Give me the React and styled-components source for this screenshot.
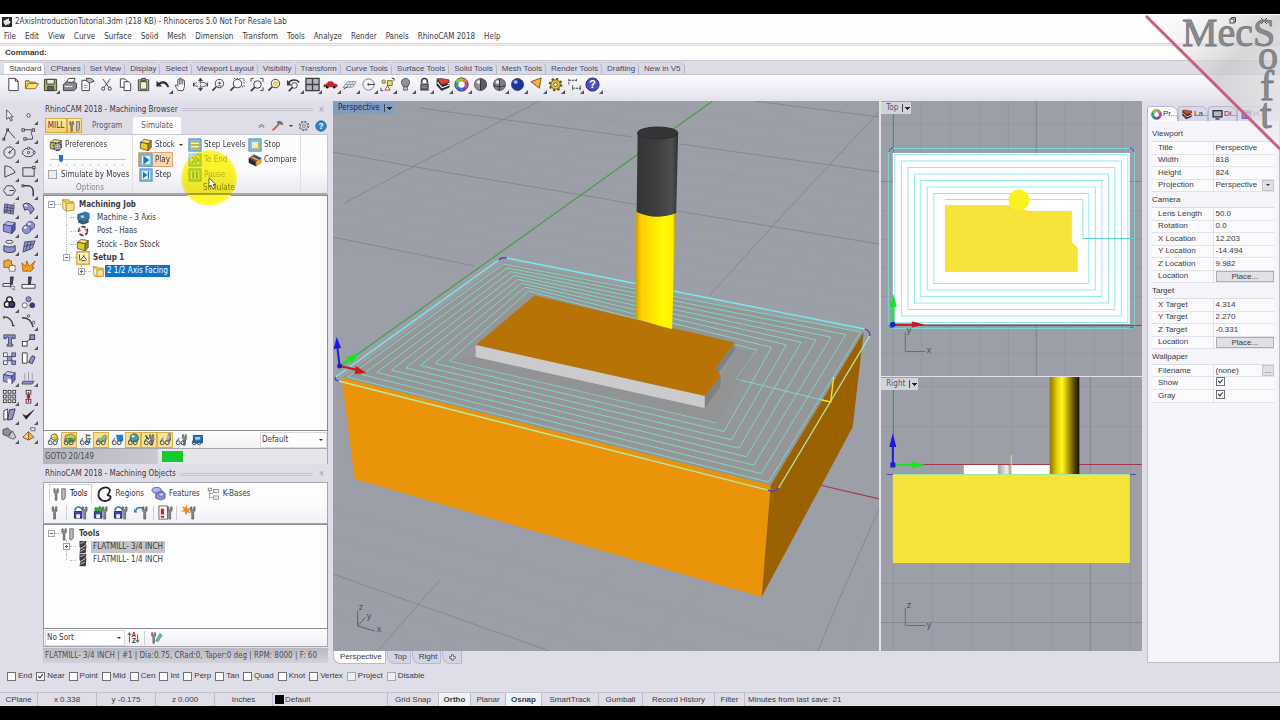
import React from "react";
import styled, { createGlobalStyle, css } from "styled-components";

const UI = '"DejaVu Sans Condensed", "DejaVu Sans", sans-serif';
const CLASSIC = '"Liberation Sans", Arial, sans-serif';

const GlobalStyle = createGlobalStyle`
  *, *::before, *::after { box-sizing: border-box; }
  body { margin: 0; background: #000; color: #3a3a42; font: 8px/12px ${UI}; }
  button, input, select { font: inherit; color: inherit; margin: 0; padding: 0; border: 0; background: none; border-radius: 0; }
  ul { list-style: none; margin: 0; padding: 0; }
  h2, h3 { margin: 0; font: inherit; }
  svg { display: block; }
`;

/* ---------- icons ---------- */

const P = "#8d92dc";
const K = "#3c3c44";
const magnifier = (x = 9, y = 7, r = 4.5) => (
  <g fill="none" stroke={K}>
    <circle cx={x} cy={y} r={r} fill="#fff" fillOpacity=".6" />
    <path d={`M${x - r * 0.7} ${y + r * 0.7}L${x - r - 3} ${y + r + 3}`} strokeWidth="1.8" />
  </g>
);
const cube = (a, b, c) => (
  <g stroke={K} strokeWidth=".8" strokeLinejoin="round">
    <path d="M1.5 5L6 1.5l8 1.5-3.500 3.500z" fill={a} />
    <path d="M1.500 5l9 1.500v8L1.500 12z" fill={b} />
    <path d="M10.500 6.500L14 3v7.500l-3.500 4z" fill={c} />
  </g>
);
const sphere = (x, y, r, fill, light = "#fff") => (
  <g>
    <circle cx={x} cy={y} r={r} fill={fill} stroke="#30303a" strokeWidth=".7" />
    <ellipse cx={x - r * 0.3} cy={y - r * 0.4} rx={r * 0.35} ry={r * 0.3} fill={light} opacity=".85" />
  </g>
);
const tool = (x = 0) => (
  <path d={`M${x} 2l1.500 0 0 3 2 0 0-3 1.500 0 0 4-1.500 2v7h-2v-7L${x} 6z`} fill="#8b8d90" stroke="#4b4d50" strokeWidth=".7" />
);
const glasses = (
  <g fill="none" stroke="#34506c" strokeWidth="1.200">
    <circle cx="4" cy="12" r="2.400" />
    <circle cx="10" cy="12" r="2.400" />
    <path d="M1.500 11L5 6M12 11l2-4" />
  </g>
);
const framed = (body) => (
  <g>
    <rect x="1" y="1" width="14" height="14" fill="#7cc3ea" stroke="#3f90c4" />
    <rect x="3.500" y="3.500" width="9" height="9" fill="#f4f6dc" />
    {body}
  </g>
);
const wheel = (
  <g fill="none" strokeWidth="3.200">
    <path d="M8 2.500a5.500 5.500 0 0 1 4.800 2.800" stroke="#f08a24" />
    <path d="M12.800 5.300a5.500 5.500 0 0 1 0 5.400" stroke="#e5338c" />
    <path d="M12.800 10.700A5.500 5.500 0 0 1 8 13.500" stroke="#7b3fd0" />
    <path d="M8 13.500a5.500 5.500 0 0 1-4.800-2.800" stroke="#2a6fe0" />
    <path d="M3.200 10.700a5.500 5.500 0 0 1 0-5.400" stroke="#25ad70" />
    <path d="M3.200 5.300A5.500 5.500 0 0 1 8 2.500" stroke="#9fcf2b" />
    <circle cx="8" cy="8" r="7.200" stroke="#333" strokeWidth=".7" />
    <circle cx="8" cy="8" r="3.800" stroke="#333" strokeWidth=".5" fill="#fff" />
  </g>
);
const layers = (
  <g stroke={K} strokeWidth=".7" strokeLinejoin="round">
    <path d="M1 3v6l5 5.500 8-3.500V8z" fill="#26262c" />
    <path d="M1.500 5.500l5 6 7.500-3" fill="none" stroke="#fff" strokeWidth="1.200" />
    <path d="M1 2l5 7 8-3.500L13.500 3 6 5z" fill="#b82218" />
    <path d="M1 2l4-.5L13.500 3 14 5.500 6 8z" fill="#ea4128" />
  </g>
);
const gear = (fill, s = K) => (
  <g stroke={s} fill={fill}>
    <circle cx="8" cy="8" r="6" strokeWidth="2.600" strokeDasharray="2.300 2.400" />
    <circle cx="8" cy="8" r="5" />
    <circle cx="8" cy="8" r="2" fill="#fff" />
  </g>
);
const mark = (size, fill) => (
  <text x="8" y="12" textAnchor="middle" fontSize={size} fontWeight="700" fontFamily={CLASSIC} fill={fill}>?</text>
);
const folder = (
  <g stroke="#b48a28" strokeWidth=".8">
    <path d="M3 3h4l1 1.500h6V14H4z" fill="#f3d35f" />
    <path d="M3 3l4 3.500V15L3 12z" fill="#fdf2b0" />
    <path d="M7 6.500h7V14H7z" fill="#fbe88e" />
  </g>
);

const ICONS = {
  app: <g><rect width="16" height="16" fill="#26282c" /><path d="M2 6c3 0 4-3 7-3l2-2 0 4 3 3-3 4-3 0-2 2-3-4z" fill="#dfe3e6" /></g>,
  doc: <path d="M3 1.500h7l3 3v10H3zM10 1.500v3h3" fill="#fff" stroke={K} />,
  open: <g stroke="#8d6a1a"><path d="M1.500 12.500V4h4l1 1.500h6V7" fill="#ecc452" /><path d="M1.500 12.500L5 7h10.500l-3.500 5.500z" fill="#fbe388" /></g>,
  save: <g stroke={K}><path d="M1.500 2.500h13v12h-13z" fill="#a9b24e" /><path d="M4 2.500h8v5H4z" fill="#e9ebee" /><path d="M5 10h6v4.500H5z" fill="#5c6064" /></g>,
  print: <g stroke={K}><path d="M4.500 6L7 1.500h7L12 6" fill="#fff" /><path d="M1.500 8l3-2.500h9l2 1.500v5l-3 2.500h-11z" fill="#85888e" /><path d="M3 10h8" stroke="#fff" /></g>,
  docprops: <g stroke={K}><path d="M2 3.500h8v11H2z" fill="#fff" /><path d="M7 1.500l5 0 3 3-5 2-3-2z" fill="#b9bcc6" /><path d="M4 9h4M4 11.500h4" strokeWidth=".6" /></g>,
  cut: <g fill="none" stroke={K}><path d="M4 2l6.500 9M12 2L5.500 11" /><circle cx="4.500" cy="12.500" r="1.700" /><circle cx="11.500" cy="12.500" r="1.700" /></g>,
  copy: <g fill="#fff" stroke={K}><path d="M2.500 2h5l2 2v7h-7z" /><path d="M6.500 5h5l2 2v7.500h-7z" /></g>,
  paste: <g stroke={K}><path d="M2.500 3h11v11.500h-11z" fill="#d8d03a" /><path d="M4.500 5h7v8h-7z" fill="#f6f3c2" /><path d="M6 1.500h4v2.500H6z" fill="#9a9da3" /></g>,
  undo: <path d="M1.500 4v6h6L5.500 8c3-2 6-1 7.500 3l2 0C14 5 9 3 4 6z" fill="#2e2e34" />,
  hand: <path d="M4.500 14.500L1 9c1-1.300 2 0 3 1V3.500c0-1.300 1.700-1.300 1.700 0V2c0-1.300 1.800-1.300 1.800 0v1c0-1.300 1.800-1.300 1.800 0V4c.2-1.200 1.900-1.200 1.900.4V10l-1.500 4.500zM5.700 3.500V8M7.500 3v5M9.300 4v4" fill="#fff" stroke={K} strokeWidth=".9" />,
  rotate: <g fill="none" stroke={K} strokeWidth=".8"><ellipse cx="8" cy="8" rx="6.500" ry="2.500" strokeDasharray="8 2" /><path d="M8 2v12" strokeDasharray="2 1" /><path d="M6 4l2-3 2 3zM6 12l2 3 2-3zM1 6v4l-1-2zM15 6v4l1-2z" fill={K} /></g>,
  zoom: <g>{magnifier()}<path d="M7 6.500h4M9 5v3M7 9.500h4" stroke={K} strokeWidth=".9" /></g>,
  zoomwin: <g><path d="M4 1.500h11v9H9" fill="none" stroke={K} strokeDasharray="1.500 1.500" />{magnifier(8, 7)}</g>,
  zoomext: <g>{magnifier(9, 8, 4)}<path d="M2 5V1.500h3M12 1.500h3V5M15 11v3.500h-3" fill="none" stroke={K} /></g>,
  zoomsel: <g>{magnifier()}<circle cx="9" cy="7" r="2.700" fill="#efdc2f" /></g>,
  undoview: <g><path d="M2 7c3-5 10-5 12-1" fill="none" stroke={K} strokeWidth="1.600" /><path d="M1 3v6h5z" fill={K} />{magnifier(9, 9, 3)}</g>,
  fourview: <g><rect x="1" y="1.500" width="14" height="13" fill="#b5b7bf" stroke={K} strokeWidth="1.400" /><path d="M8 1.500v13M1 8h14" stroke={K} strokeWidth="1.400" /></g>,
  car: <g><path d="M1 8.500l3-1 2-2.500h4l2 2.500 3 .5v2.500H1z" fill="#d3221c" stroke="#7e1814" strokeWidth=".6" /><circle cx="4.500" cy="11" r="1.300" /><circle cx="12" cy="11" r="1.300" /></g>,
  cplane: <g fill="none" stroke="#8e9099"><path d="M1 11l5-6h9l-4 6zM3.500 8h9.500M5 11l4-6M8 11l4-6" /><path d="M2 13l4-3" stroke={K} /></g>,
  circlept: <g fill="none" stroke="#74767e"><circle cx="8" cy="8" r="6" /><path d="M8 8h7" stroke={K} /><circle cx="8" cy="8" r="1" fill={K} /></g>,
  select: <g><circle cx="4" cy="5" r="2" fill="#f1c52d" stroke={K} strokeWidth=".6" /><rect x="8" y="4" width="5" height="5" fill="#f3dc3f" stroke={K} strokeWidth=".7" /><path d="M5 14l3-4.500 3 4.500z" fill="#fff" stroke="#b0483c" /><path d="M12.500 1.500H15V4M1 11.500v3h2.500" fill="none" stroke={K} /></g>,
  bulb: <g stroke={K} strokeWidth=".8"><path d="M5.500 10C2 6 4 1.500 8 1.500S14 6 10.500 10z" fill="#8f9299" /><path d="M6 10.500h4v3.500H6z" fill="#c9ccd2" /></g>,
  lock: <g><path d="M5 7V4.500a3 3 0 0 1 6 0V7" fill="none" stroke={K} strokeWidth="1.600" /><rect x="3.500" y="7" width="9" height="7.500" fill="#4c4e56" /><path d="M5 9.500h6M5 11.500h6" stroke="#a9abb3" /></g>,
  layers,
  wheel,
  shade: <g>{sphere(8, 8, 6.5, "#8e9096")}<path d="M8 1.500a6.500 6.500 0 0 1 0 13z" fill="#2c2c32" opacity=".5" /><path d="M8 2v12" stroke="#303036" /></g>,
  render: <g>{sphere(8, 8, 6.500, "#7c7e84")}<path d="M8 2v12M2 9c4 2 8 2 12 0" fill="none" stroke="#303036" /></g>,
  blue: sphere(8, 8, 6.5, "#1d3696", "#b9c8ff"),
  spot: <path d="M2 5l11-4-2 11z" fill="#f0b044" stroke="#7b5414" />,
  options: gear("#e6c64a", "#6b5a20"),
  dims: <path d="M2 2v7M2 3.500h8M10 2v3M6 12h9M6 9v5M14 9v5" fill="none" stroke={K} strokeDasharray="2.500 .8" />,
  help: <g><circle cx="8" cy="8" r="7" fill="#4a50c4" stroke="#20246e" />{mark(12, "#fff")}</g>,

  arrow: <path d="M5 2v10l2.500-2 2 4 1.500-1-2-3.500h3z" fill="#fff" stroke={K} strokeWidth=".9" />,
  point: <circle cx="8" cy="8" r="1.800" fill="#fff" stroke={K} />,
  polyline: <g fill="none" stroke={K}><path d="M2 13L6 3l8 9" /><rect x="1" y="12" width="2" height="2" /><rect x="5" y="2" width="2" height="2" /></g>,
  curve: <g fill="none" stroke={K}><path d="M2 3h11c-5 4 1 6-1 10H5" /><rect x="1" y="2" width="2.500" height="2.500" fill="#fff" /><rect x="12" y="2" width="2.500" height="2.500" fill="#fff" /><rect x="3" y="11.500" width="2.500" height="2.500" fill="#fff" /></g>,
  circle: <g fill="none" stroke={K}><circle cx="8" cy="8" r="6" /><path d="M8 8l4-4" /><circle cx="8" cy="8" r=".8" /></g>,
  ellipse: <g fill="none" stroke={K}><ellipse cx="8" cy="8" rx="6.500" ry="4.500" /><circle cx="8" cy="8" r="1.200" /><circle cx="8" cy="3.500" r="1.200" fill="#fff" /><circle cx="14" cy="8" r="1.200" fill="#fff" /></g>,
  arc: <path d="M3 2v12l11-5C12 5 8 2 3 2z" fill="none" stroke={K} />,
  rect: <g fill="none" stroke={K}><rect x="2" y="4" width="12" height="9" /><rect x="12.500" y="2.500" width="2.500" height="2.500" fill="#fff" /></g>,
  polygon: <g fill="none" stroke={K}><path d="M5 3h6l3.500 5-3.500 5H5L1.500 8z" /><path d="M8 8h5" /></g>,
  fillet: <g fill="none" stroke={K}><path d="M2 3h5c4 0 6 3 6 6v5" strokeWidth="1.600" /><rect x="1" y="2" width="2" height="2" fill="#fff" /></g>,
  srfpts: <g stroke={K} strokeWidth=".8"><path d="M3 3l10 2-1 9-10-2z" fill={P} /><path d="M6 3.500l-1 9M10 4.500l-1 9M2.500 6.500l10 1.500M2 9.500l10 1.500M13 2l-2 3M2 14l2-3" fill="none" /></g>,
  srfcurve: <g stroke={K}><path d="M2 4c5-4 10 0 12 5l-4 5c0-5-3-6-6-4z" fill={P} /><path d="M2 4l4-1 2 4" fill="#fff" strokeWidth=".6" /></g>,
  box: cube("#b7bbf4", P, "#5459b8"),
  spheres: <g>{sphere(10, 6, 4.5, P)}{sphere(6, 10, 4.5, P)}</g>,
  loft: <g stroke={K} fill={P}><path d="M2 7c3 2 9 2 12 0v6c-3 2-9 2-12 0z" /><ellipse cx="8" cy="3" rx="4" ry="1.600" fill="#fff" /></g>,
  patch: <g stroke={K} strokeWidth=".8"><path d="M4 3l11-1-3 8-10 4z" fill={P} /><path d="M7.500 3L5 13M11 2.500L8.500 12M3 8l11-3" fill="none" /></g>,
  puzzle: <g stroke="#7d5414" strokeWidth=".8"><path d="M2 3h3a1.500 1.500 0 0 1 3 0h2v3a1.500 1.500 0 0 1 0 3v1H2z" fill="#f2aa30" /><path d="M8 8h6v6H8v-2a1 1 0 0 1 0-2z" fill="#fff" /></g>,
  burst: <path d="M2 14L1 5l4 4 1-6 3 6 6-6-3 7 2 0-3 4z" fill="#f4a11e" stroke="#96540c" strokeWidth=".8" />,
  trim: <g stroke={K}><path d="M9 1l3 0-1 8-2 0z" fill="#343a92" /><path d="M1 8h8v3H1z" fill="#fff" /><path d="M8 11l5 0 0 4z" fill="#fff" strokeWidth=".7" /></g>,
  split: <g stroke={K}><path d="M8 1l3 0-1 8-2 0z" fill="#343a92" /><path d="M1 9h14v4H1z" fill="#fff" /></g>,
  bool1: <g fill="none" stroke="#1c1c28" strokeWidth="1.500"><circle cx="8" cy="5" r="3" fill="#fff" /><circle cx="5.500" cy="10" r="3" fill="#fff" /><circle cx="10.500" cy="10" r="3" fill="#363a8c" /></g>,
  bool2: <g stroke={K} strokeWidth=".8"><circle cx="8" cy="4.500" r="2.700" fill={P} /><circle cx="4" cy="11" r="2.700" fill="#fff" /><circle cx="12" cy="11" r="2.700" fill="#333a90" /></g>,
  bend: <path d="M2 3c6 0 9 4 10 10M2 2v3M10.500 12.500h3" fill="none" stroke={K} strokeWidth="1.300" />,
  bendpts: <g fill="none" stroke={K}><path d="M1 4c7 0 10 3 12 10" strokeWidth="1.500" /><circle cx="8" cy="2" r="1.300" fill="#fff" /><circle cx="13.500" cy="9" r="1.300" fill="#fff" /></g>,
  text: <path d="M2 2h12v4h-2.500V4.500H10V12h1.500v2h-6v-2H7V4.500H4.500V6H2z" fill={P} stroke={K} strokeWidth=".9" />,
  move: <g stroke={K} fill="#fff"><rect x="1.500" y="9" width="5" height="5" /><rect x="9.500" y="2" width="5" height="5" fill={P} /><path d="M6 9.500L10 6" /></g>,
  array: <g stroke={K} strokeWidth=".8" fill="#fff"><rect x="1.500" y="2" width="4" height="4" /><rect x="6" y="6" width="4.500" height="4.500" fill={P} /><rect x="10.500" y="2" width="4" height="4" fill={P} /><rect x="1.500" y="10.500" width="4" height="4" /><rect x="10.500" y="10.500" width="4" height="4" fill={P} /></g>,
  rotate2: <g stroke={K} fill="#fff"><path d="M1.500 2h5v11h-5z" /><path d="M8 12l4-7 3 1.500-3 7z" fill={P} /></g>,
  solid: <g>{cube("#c3c6f7", P, "#6b70cb")}<path d="M6 9l4 1v5l-4-1z" fill="#fff" /></g>,
  extrude: <g stroke={K} strokeWidth=".8"><path d="M2 12h12l-2 3H1z" fill={P} /><path d="M4 11V3M8 11V2M12 11V3" stroke="#8b8fa8" /></g>,
  grid9: <g fill="#fff" stroke={K}>{[2, 7, 12].map((x) => [2, 7, 12].map((y) => <rect key={x + "-" + y} x={x - 0.5} y={y - 0.5} width="3" height="3" />))}</g>,
  chain: <g fill="#fff" stroke={K}><rect x="5.500" y="1.500" width="5" height="4" /><rect x="5.500" y="11" width="5" height="4" /><path d="M8 3v11" stroke="#c3202a" strokeWidth="1.600" /><circle cx="8" cy="8" r="1.500" fill="#c3202a" /></g>,
  books: <g stroke={K}><path d="M2 4l4-2v10l-4 2z" fill="#fff" /><path d="M8 3l6-1-3 11-5 1z" fill={P} /></g>,
  check: <path d="M2 8l3.500 5L14 3 5.500 9.500z" fill="#1e1e24" stroke="#1e1e24" strokeWidth=".6" />,
  solids: <g stroke={K} strokeWidth=".8"><path d="M1 4l5-2 4 4-4 5-5-2z" fill="#8e9098" /><path d="M7 12l4-7 4 7-3 2z" fill="#c9cbd2" /></g>,
  pyramid: <g stroke="#7b5414" strokeWidth=".8"><path d="M8 6l6 6-6 3-6-3z" fill="#f0b63e" /><path d="M8 6v9L2 12z" fill="#f9d67c" /><path d="M10 2h5v3h-4z" fill="#fff" stroke={K} /></g>,

  prefs: <g>{cube("#e5d770", "#cdbb3d", "#9b8b24")}<g transform="translate(4 4) scale(.72)">{gear("#c8cacf")}</g></g>,
  stock: cube("#f4e060", "#e6cb27", "#a98812"),
  tool: tool(4.5),
  play: framed(<path d="M5 3l7 5-7 5z" fill="#2476b8" />),
  step: framed(<path d="M4.500 4l5 4-5 4zM10 4h1.500v8H10z" fill="#2476b8" />),
  levels: framed(<path d="M3 4.500h10M3 8h10M3 11.500h10" stroke="#c0a000" strokeWidth="1.500" />),
  toend: framed(<path d="M4 4l4 4-4 4M8 4l4 4-4 4" fill="none" stroke="#2476b8" strokeWidth="1.500" />),
  pause: framed(<path d="M5 4h2v8H5zM9 4h2v8H9z" fill="#2476b8" />),
  stop: framed(<rect x="4" y="4" width="8" height="8" fill="#f7edb8" stroke="#c9ac3c" />),
  compare: <g strokeWidth=".5" stroke={K}><path d="M1 6l6-4 8 4-6 4z" fill="#d9312a" /><path d="M3 5l2-1.300 8 4-2 1.300z" fill="#f1dd31" /><path d="M5 3.700l2-1.300 8 3.600-2 1.500z" fill="#3263cf" /><path d="M1 6l8 4v5L1 11z" fill="#26262c" /><path d="M9 10l6-4v5l-6 4z" fill="#e9b52b" /></g>,
  up: <path d="M3 9l5-3 5 3M3 12l5-3 5 3" fill="none" stroke="#555" strokeWidth="1.200" />,
  hammer: <g><path d="M2 14L9 7" stroke="#d06a1c" strokeWidth="2.400" /><path d="M7 3l4-1 4 3-1 3-3-2-2 2z" fill="#6d7076" /></g>,
  cog: <g fill="none" stroke="#6a6c74"><circle cx="8" cy="8" r="6.300" strokeWidth="1.600" strokeDasharray="2.500 2.450" /><circle cx="8" cy="8" r="5" /><circle cx="8" cy="8" r="2" /></g>,
  info: <g><circle cx="8" cy="8" r="7" fill="#2f86c8" stroke="#1b5f98" />{mark(11, "#fff")}</g>,
  job: <g stroke="#a9811e" strokeWidth=".8"><path d="M2 2h7l1 2h4v8H4z" fill="#f1cd52" /><path d="M2 2l4 4v9l-4-3z" fill="#fbe99b" /><path d="M6 6h9v8l-9 1z" fill="#f8e08a" /></g>,
  machine: <g stroke="#163a58" strokeWidth=".7"><path d="M2 4l9-3 4 2v6l-9 3-4-2z" fill="#2c7fc0" /><path d="M3 11l6 1 5-2v3l-6 2-5-2z" fill="#4d5c68" /><path d="M4 5l6-1v4L6 9z" fill="#a8d4f0" /></g>,
  post: <g fill="none" stroke="#4b3c44" strokeWidth="2"><circle cx="8" cy="8" r="5" strokeDasharray="5 2" /><path d="M3 6l3 2M10 5l3 5" stroke="#c77890" strokeWidth="1.500" /></g>,
  setup: <g><rect x="1" y="1" width="14" height="14" fill="#fdf3cf" stroke="#e19c22" strokeWidth="1.600" /><path d="M4 4v7h7M4 11l6-6M8 5l4 5" fill="none" stroke={K} /><circle cx="5" cy="10" r="1.500" fill="#e6a02c" /></g>,
  folder,
  g1: <g>{sphere(9, 5, 4, "#e3bd38")}{glasses}</g>,
  g2: <g><path d="M3 3l8-2 4 3v6l-9 2-4-3z" fill="#e3c13f" stroke={K} strokeWidth=".7" /><path d="M6 6h6v4H6z" fill="#3d9a57" />{glasses}</g>,
  g3: <g><path d="M9 1v11" stroke={K} /><path d="M9 3h5" stroke="#c23a2c" strokeWidth="2" /><path d="M9 7h5" stroke="#2f9f48" strokeWidth="2" /><path d="M9 11h5" stroke="#2c6fc0" strokeWidth="2" />{glasses}</g>,
  g4: <g><path d="M4 10l8-8 3 3-7 7z" fill="#7fc29a" stroke={K} strokeWidth=".6" />{glasses}</g>,
  g5: <g><path d="M6 2h9v8H8z" fill="#2c7fc0" />{glasses}</g>,
  g6: <g>{sphere(9, 6, 5, "#3ea4a2")}{glasses}</g>,
  g7: <g>{tool(8)}<path d="M3 3l4 5" stroke={K} strokeWidth="1.500" />{glasses}</g>,
  g8: <g><path d="M11 1h3v8h-5" fill="#a9abae" stroke={K} strokeWidth=".7" />{glasses}</g>,
  g9: <g>{tool(9)}{glasses}</g>,
  g10: <g><path d="M3 3h11v9H3z" fill="#2c7fc0" stroke="#163a58" /><path d="M5 5h6v3H5z" fill="#a8d4f0" />{glasses}</g>,
  tools: <g>{tool(1)}<path d="M10 2h4v10l-2 3-2-1V8z" fill="#b9bbbe" stroke="#4b4d50" strokeWidth=".8" /></g>,
  regions: <path d="M13 4C10-1 2 2 1.500 8s5 8 9 6.500 4-5 1-5S13 8 13 4z" fill="none" stroke="#2a2024" strokeWidth="1.800" />,
  features: <g stroke="#4a4e8e" strokeWidth=".8"><ellipse cx="6" cy="4.500" rx="5" ry="3" fill="#b1b5ee" /><path d="M5 8l7-3 3 3v5l-4 2-6-2z" fill={P} /><ellipse cx="11" cy="9" rx="3" ry="2" fill="#c7caf4" /></g>,
  kbases: <g fill="#eee" stroke="#85878c"><path d="M3 3v10h4M3 8h4" fill="none" /><rect x="1.500" y="1.500" width="4" height="3" /><rect x="8" y="3" width="6" height="4" /><rect x="8" y="11" width="6" height="4" /></g>,
  load: <g><path d="M1.500 7h8v7h-8z" fill="#434aa8" stroke="#22264e" /><path d="M2 6c1-5 6-5 8-1" fill="none" stroke="#2b7fc4" strokeWidth="1.800" /><path d="M3.500 10h4v4h-4z" fill="#fff" />{tool(10)}</g>,
  loadg: <g><path d="M1.500 7h8v7h-8z" fill="#434aa8" stroke="#22264e" /><path d="M3.500 10h4v4h-4z" fill="#fff" /><path d="M2 3h5V1l4 4-4 4V7H2z" fill="#36a844" stroke="#1c6126" strokeWidth=".6" />{tool(10)}</g>,
  undotool: <g><path d="M3 6c1-4 5-4 8-2" fill="none" stroke="#2b7fc4" strokeWidth="1.800" /><path d="M1 4l4 4-4 0z" fill="#2b7fc4" />{tool(10)}</g>,
  dele: <g><rect x="1" y="1" width="9" height="14" fill="#fff" stroke={K} strokeWidth=".8" /><path d="M3 4h3.500v6H3zM3 11.500h3.500v2H3z" fill="#cf2327" />{tool(10)}</g>,
  sparkle: <g><path d="M1 1l3 2 2-3 1 4 4-1-3 3 3 3-4-1-2 3-1-4-4 0 3-2z" fill="#f08a1c" />{tool(10)}</g>,
  mill: <g><path d="M4 1h8l-1 4 1 1-1 9H4l1-6-1-1z" fill="#3a3c40" /><path d="M5 4l5-2M5 10l6-4M5 13l5-3" stroke="#aeb0b4" strokeWidth="1.200" /></g>,
  sort: <g><path d="M3 14V3M1 5l2-3 2 3M13 4v9M11 11l2 3 2-3" fill="none" stroke={K} /><text x="8.500" y="7.500" fontSize="8" fontWeight="700" textAnchor="middle" fill="#a02020" fontFamily={CLASSIC}>A</text><text x="8.500" y="15" fontSize="8" fontWeight="700" textAnchor="middle" fill={K} fontFamily={CLASSIC}>Z</text></g>,
  filter: <g>{tool(2)}<path d="M7 12l5-9 3 2-5 8z" fill="#59c7a6" stroke="#2a7f68" strokeWidth=".7" /></g>,
  monitor: <g><rect x="1.500" y="2.500" width="13" height="9" fill="#b6bac4" stroke="#26262c" strokeWidth="1.800" /><path d="M5 14.500h6" stroke="#26262c" strokeWidth="1.800" /></g>,
  helppane: <g><rect x="1.500" y="2" width="13" height="12" fill="#8e93d8" stroke="#4b4f9a" /><path d="M1.500 5h13" stroke="#4b4f9a" strokeWidth="2" /><path d="M5 13l4-6 3 6" fill="#c0553f" /></g>,
  plus: <path d="M6 1.500h4V6h4.500v4H10v4.500H6V10H1.500V6H6z" fill="#fff" stroke="#55555e" strokeWidth="2" />,
};

const Svg = styled.svg`
  width: ${(p) => p.$size}px;
  height: ${(p) => p.$size}px;
  flex: none;
`;
const Icon = ({ name, size = 15 }) => (
  <Svg $size={size} viewBox="0 0 16 16" aria-hidden="true">{ICONS[name]}</Svg>
);

/* ---------- frame ---------- */

const Page = styled.div`
  display: flex;
  flex-direction: column;
  min-height: 100vh;
  padding: 14px 0;
  background: #000;
`;
const Shell = styled.div`
  position: relative;
  flex: 1;
  display: flex;
  flex-direction: column;
  background: #dfdee8;
`;
const TitleBar = styled.header`
  display: flex;
  align-items: center;
  gap: 3px;
  height: 15px;
  padding: 1px 0 0 2px;
  background: #fdfdfd;
`;
const MenuBar = styled.nav`
  display: flex;
  gap: 9px;
  height: 14px;
  padding: 2px 0 0 4px;
  align-items: center;
  background: #fdfdfd;
`;
const MenuItem = styled.button`
  height: 12px;
`;
const CommandRow = styled.label`
  display: flex;
  align-items: center;
  gap: 4px;
  height: 18px;
  padding: 2px 0 0 5px;
  margin-bottom: 1px;
  border-top: 1px solid #d8d8de;
  border-bottom: 1px solid #c9c9d0;
  background: linear-gradient(#f0f0f2 0 1px, #dcdce0 1px 2px, #fefefe 2px);
  font: 700 8px/12px ${CLASSIC};
  input { flex: 1; height: 12px; outline: none; }
`;
const ToolTabs = styled.nav`
  display: flex;
  height: 13px;
  padding-left: 4px;
  background: #dddce7;
  border-bottom: 1px solid #c5c4d2;
  font: 8px/12px ${CLASSIC};
`;
const ToolTab = styled.button`
  height: 12px;
  padding: 0 3px 0 5px;
  border-right: 1px solid #b9b8c9;
  border-top: 1px solid #c9c8d6;
  border-radius: 0 5px 0 0;
  background: ${(p) => (p.$on ? "#fff" : "#d9d8e8")};
  color: #4a4a55;
`;
const ToolRow = styled.div`
  height: 26px;
  background: linear-gradient(#fbfbff, #e3e2ec);
`;
const ToolStrip = styled.div`
  display: flex;
  justify-content: space-between;
  width: 602px;
  padding-left: 4px;
`;
const IconButton = styled.button`
  position: relative;
  display: flex;
  align-items: center;
  justify-content: center;
  width: 18px;
  height: 18px;
  ${(p) => p.$fly && css`
    &::after {
      content: "";
      position: absolute;
      right: -1px;
      bottom: -1px;
      border: 2px solid transparent;
      border-right-color: #55555c;
      border-bottom-color: #55555c;
    }
  `}
`;
const Main = styled.main`
  flex: 1;
  display: flex;
  min-height: 0;
`;
const SideTools = styled.div`
  display: grid;
  grid-template-columns: 19px 19px;
  grid-template-rows: repeat(18, 1fr);
  align-items: center;
  width: 43px;
  height: 337px;
  margin-top: 5px;
  flex: none;
`;

/* ---------- machining panels ---------- */

const Dock = styled.section`
  display: flex;
  flex-direction: column;
  flex: none;
  width: 285px;
  margin-right: 5px;
  padding-bottom: 2px;
`;
const DockTitle = styled.div`
  display: flex;
  align-items: center;
  gap: 4px;
  height: ${(p) => p.$h || 15}px;
  padding: 2px 2px 0;
  h2 { white-space: nowrap; }
  &::after {
    content: "";
    order: 1;
    flex: 1;
    height: 3px;
    border-top: 1px solid #c5c4d0;
    border-bottom: 1px solid #c5c4d0;
  }
  button { order: 2; width: 9px; color: #9a99a6; line-height: 10px; }
`;
const RibbonTabs = styled.div`
  display: flex;
  align-items: flex-end;
  height: 18px;
  padding-left: 2px;
`;
const ModeButton = styled.button`
  display: flex;
  align-items: center;
  justify-content: center;
  width: ${(p) => p.$w}px;
  height: 15px;
  margin-bottom: 1px;
  border: 1px solid #d3a94a;
  background: linear-gradient(#fdeaa8, #f9cf6a);
`;
const RibbonTab = styled.button`
  height: 17px;
  padding: 0 8px;
  margin-left: ${(p) => p.$ml || 0}px;
  border-radius: 2px 2px 0 0;
  background: ${(p) => (p.$on ? "#fdfdfe" : "none")};
  color: #5a5a63;
`;
const RibbonExtras = styled.div`
  display: flex;
  align-items: center;
  gap: 5px;
  margin-left: auto;
  padding: 0 1px 2px 0;
`;
const RibbonWrap = styled.div`
  position: relative;
  z-index: 1;
`;
const Ribbon = styled.div`
  display: flex;
  height: 61px;
  border: 1px solid #c7c6d1;
  border-bottom: 2px solid #a9a8b3;
  background: linear-gradient(#fdfdfe, #fbfbfd 60%, #e9e9ee);
`;
const RibbonGroup = styled.fieldset`
  display: flex;
  flex-direction: column;
  width: ${(p) => p.$w}px;
  margin: 0;
  padding: 2px 0 0 ${(p) => p.$pl}px;
  border: 0;
  border-right: 1px solid #e0e0e6;
  h3 { text-align: center; color: #84848e; line-height: 12px; }
`;
const RibbonCols = styled.div`
  display: grid;
  grid-template-columns: ${(p) => p.$cols};
  grid-template-rows: repeat(3, minmax(0, 1fr));
  grid-auto-flow: column;
  height: 46px;
  align-items: center;
`;
const RibbonButton = styled.button`
  display: flex;
  align-items: center;
  gap: 2px;
  width: max-content;
  height: 15px;
  padding-right: 2px;
  white-space: nowrap;
  border: 1px solid ${(p) => (p.$on ? "#e0a870" : "transparent")};
  background: ${(p) => (p.$on ? "#fbd9ae" : "none")};
  &:disabled { color: #b4b4b8; }
  &:disabled svg { opacity: 0.5; }
`;
const Caret = styled.span`
  flex: none;
  border: 2px solid transparent;
  border-top-color: #333;
  border-bottom: 0;
  margin-left: ${(p) => p.$ml || 0}px;
`;
const Slider = styled.input`
  appearance: none;
  width: 76px;
  height: 12px;
  margin-left: 2px;
  background:
    linear-gradient(#c3c3cb, #c3c3cb) 0 5px / 100% 1px no-repeat,
    repeating-linear-gradient(90deg, #c9c9d1 0 1px, transparent 1px 8px) 0 10px / 100% 2px no-repeat;
  &::-webkit-slider-thumb {
    appearance: none;
    width: 4px;
    height: 7px;
    margin-top: -2px;
    background: #1674c5;
    border-radius: 0 0 2px 2px;
  }
`;
const Check = styled.input`
  appearance: none;
  position: relative;
  flex: none;
  width: 9px;
  height: 9px;
  border: 1px solid ${(p) => (p.$soft ? "#a6a6af" : "#6e6e76")};
  background: ${(p) => (p.$soft ? "#eeeef2" : "#fff")};
  &:checked::after {
    content: "";
    position: absolute;
    left: 2px;
    top: 0;
    width: 3px;
    height: 5px;
    border: solid #333;
    border-width: 0 1px 1px 0;
    transform: rotate(40deg);
  }
`;
const CheckLabel = styled.label`
  display: flex;
  align-items: center;
  gap: ${(p) => p.$gap}px;
  white-space: nowrap;
`;
const TreeBox = styled.div`
  flex: ${(p) => (p.$h ? "none" : "1")};
  height: ${(p) => (p.$h ? p.$h + "px" : "auto")};
  padding-top: 2px;
  border: 1px solid #8b8b95;
  background: #fdfdfd;
`;
const Tree = styled.ul`
  display: grid;
  grid-auto-rows: minmax(0, 1fr);
  height: ${(p) => p.$h}px;
`;
const TreeRow = styled.li`
  position: relative;
  display: flex;
  align-items: center;
  padding-left: ${(p) => p.$level * 15 + 4}px;
  ${(p) => p.$level > 0 && css`
    &::before {
      content: "";
      position: absolute;
      left: ${p.$level * 15 + 7}px;
      top: 0;
      bottom: ${p.$last ? "50%" : 0};
      border-left: 1px dotted #b9b9c0;
    }
  `}
`;
const Branch = styled.span`
  flex: none;
  width: 6px;
  border-top: 1px dotted #b9b9c0;
`;
const Slot = styled.span`
  flex: none;
  width: 7px;
`;
const Expander = styled.button`
  position: relative;
  flex: none;
  width: 7px;
  height: 7px;
  border: 1px solid #a2a2ac;
  background: linear-gradient(#5c5c90, #5c5c90) center / 3px 1px no-repeat, #fff;
  ${(p) => p.$plus && css`
    background: linear-gradient(#5c5c90, #5c5c90) center / 3px 1px no-repeat, linear-gradient(#5c5c90, #5c5c90) center / 1px 3px no-repeat, #fff;
  `}
`;
const TreeText = styled.span`
  margin-left: ${(p) => p.$ml}px;
  padding: 0 2px;
  line-height: 12px;
  white-space: nowrap;
  font-weight: ${(p) => (p.$bold ? 700 : 400)};
  background: ${(p) => p.$bg || "none"};
  color: ${(p) => p.$color || "inherit"};
`;
const Bar = styled.div`
  display: flex;
  align-items: center;
  height: ${(p) => p.$h}px;
  padding-left: ${(p) => p.$pl || 0}px;
  border: 1px solid #a5a5b0;
  border-top: 0;
  background: linear-gradient(#fdfdfe, #f1f1f5);
`;
const BarButton = styled.button`
  display: flex;
  align-items: center;
  justify-content: center;
  width: ${(p) => p.$w || 16}px;
  height: 16px;
  border: 1px solid ${(p) => (p.$on ? "#d6b24f" : "transparent")};
  background: ${(p) => (p.$on ? "#fbe08e" : "none")};
`;
const Rule = styled.span`
  width: 1px;
  height: 14px;
  margin: 0 3px;
  background: #cfcfd6;
`;
const SelectBox = styled.label`
  position: relative;
  display: flex;
  align-items: center;
  width: ${(p) => p.$w}px;
  height: 16px;
  margin-left: ${(p) => p.$ml || 0};
  border: 1px solid #d8d8df;
  background: #fff;
  select { appearance: none; width: 100%; height: 14px; padding: 1px 0 0 1px; outline: none; }
  ${Caret} { position: absolute; right: 3px; }
`;
const Progress = styled.div`
  display: flex;
  align-items: center;
  height: 15px;
  padding-left: 2px;
  border-right: 1px solid #a5a5b0;
  background: linear-gradient(90deg, #b4b4be, #c9c9d0 40%, #e6e6e8 41%);
  span { width: 117px; color: #4c4c55; }
  progress { appearance: none; height: 11px; flex: 1; border: 0; }
  progress::-webkit-progress-bar { background: none; }
  progress::-webkit-progress-value { background: #12cc2c; }
`;
const ObjTabs = styled.div`
  display: flex;
  height: 20px;
  padding: 1px 0 0 5px;
  border: 1px solid #a5a5b0;
  border-width: 1px 1px 0;
  background: #fdfdfe;
`;
const ObjTab = styled.button`
  display: flex;
  align-items: center;
  gap: 3px;
  padding: 0 ${(p) => (p.$on ? 3 : 2)}px 0 3px;
  margin-right: ${(p) => p.$mr || 0}px;
  border: 1px solid ${(p) => (p.$on ? "#cfcfd6" : "transparent")};
  border-bottom: 0;
  color: ${(p) => (p.$on ? "#111116" : "inherit")};
`;
const ToolStatus = styled.div`
  height: 15px;
  padding: 1px 0 0 2px;
  line-height: 14px;
  margin-top: 1px;
  background: linear-gradient(#b9b9c3, #d2d2da);
  color: #4c4c55;
  white-space: nowrap;
`;

/* ---------- viewports ---------- */

const Work = styled.section`
  flex: 1;
  min-width: 0;
  display: flex;
  flex-direction: column;
`;
const Viewports = styled.div`
  flex: 1;
  min-height: 0;
  display: grid;
  grid-template-columns: minmax(0, 547fr) minmax(0, 261fr);
  grid-template-rows: minmax(0, 275fr) minmax(0, 274fr);
  gap: 1px 2px;
  background: #e2e2ea;
`;
const Viewport = styled.div`
  position: relative;
  min-height: 0;
  background: #9c9ea8;
  grid-row: ${(p) => (p.$tall ? "1 / 3" : "auto")};
  > svg { position: absolute; inset: 0; width: 100%; height: 100%; }
`;
const ViewLabel = styled.button`
  position: absolute;
  left: 0;
  top: 1px;
  display: flex;
  align-items: center;
  height: 12px;
  padding-left: 5px;
  background: ${(p) => (p.$on ? "#7f9cc2" : "#d3d3da")};
  color: ${(p) => (p.$on ? "#1e2a44" : "#55555e")};
  &::after {
    content: "";
    width: 9px;
    height: 8px;
    margin-left: 4px;
    border-left: 1px solid #44444c;
    background: linear-gradient(#222, #222) 2px 3px / 5px 1px no-repeat, linear-gradient(#222, #222) 3px 4px / 3px 1px no-repeat, linear-gradient(#222, #222) 4px 5px / 1px 1px no-repeat;
  }
`;
const ViewTabs = styled.div`
  display: flex;
  gap: 1px;
  height: 14px;
  font-family: ${CLASSIC};
`;
const ViewTab = styled.button`
  min-width: 20px;
  height: 13px;
  padding: 0 3px 0 6px;
  border: 1px solid #b9b8c9;
  border-top: 0;
  border-radius: 0 0 2px 8px;
  background: ${(p) => (p.$on ? "#fff" : "#d5d4e6")};
`;

/* ---------- properties ---------- */

const Props = styled.aside`
  display: flex;
  flex-direction: column;
  flex: none;
  width: 138px;
  padding: 5px 0 2px 5px;
  font-family: ${CLASSIC};
`;
const PropTabs = styled.div`
  display: flex;
  height: 15px;
`;
const PropTab = styled.button`
  display: flex;
  align-items: center;
  gap: 1px;
  width: ${(p) => p.$w}px;
  padding-left: 3px;
  border: 1px solid #b9b8c9;
  border-bottom: 0;
  border-radius: 3px 7px 0 0;
  background: ${(p) => (p.$on ? "#fbfbfd" : "#d9d8e8")};
`;
const PropBody = styled.div`
  flex: 1;
  padding: 5px 5px 0 4px;
  border: 1px solid #bdbccb;
  border-top: 0;
  background: #f5f4fa;
  h3 { height: 15px; line-height: 15px; }
`;
const PropTable = styled.table`
  width: 100%;
  height: ${(p) => p.$h}px;
  border-collapse: collapse;
  table-layout: fixed;
  background: #fbfbfd;
  border-top: 1px solid #dddce6;
  font-size: 8px;
  tr { height: 12px; }
  th, td { padding: 0; height: 12px; line-height: 10px; text-align: left; vertical-align: middle; font-weight: 400; border-bottom: 1px solid #e3e2ea; }
  th { width: 61px; padding-left: 6px; border-right: 1px solid #e3e2ea; }
  td { padding-left: 2px; }
`;
const PlaceButton = styled.button`
  display: block;
  width: 100%;
  height: 11px;
  line-height: 9px;
  border: 1px solid #adadb2;
  background: #e1e1e3;
`;
const CellRow = styled.div`
  display: flex;
  justify-content: space-between;
  align-items: center;
  select { appearance: none; flex: 1; min-width: 0; height: 11px; }
`;
const TinyButton = styled.button`
  display: flex;
  align-items: center;
  justify-content: center;
  width: 12px;
  height: 11px;
  border: 1px solid #c4c4ca;
  background: #e1e1e3;
`;

/* ---------- bottom bars ---------- */

const SnapBar = styled.div`
  display: flex;
  align-items: center;
  gap: 4px;
  height: 27px;
  padding: 0 0 5px 7px;
  font-family: ${CLASSIC};
`;
const StatusBar = styled.footer`
  display: flex;
  height: 14px;
  border-top: 1px solid #c3c3ce;
  font: 8px/13px ${CLASSIC};
`;
const StatusCell = styled.button`
  display: flex;
  align-items: center;
  justify-content: ${(p) => (p.$left ? "flex-start" : "center")};
  gap: 1px;
  width: ${(p) => p.$w}px;
  padding-left: ${(p) => (p.$left ? 2 : 0)}px;
  border-right: 1px solid #bdbdc9;
  white-space: nowrap;
  font-weight: ${(p) => (p.$on ? 700 : 400)};
  background: ${(p) => (p.$on ? "#eef3f8" : "none")};
`;
const Message = styled.span`
  padding-left: 3px;
`;
const Swatch = styled.span`
  width: 9px;
  height: 9px;
  background: #000;
`;

/* ---------- overlays ---------- */

const Logo = styled.svg`
  position: absolute;
  top: 0;
  right: 0;
  width: 136px;
  height: 136px;
  overflow: visible;
  pointer-events: none;
`;
const Spotlight = styled.div`
  position: absolute;
  left: 138px;
  top: 16px;
  width: 56px;
  height: 56px;
  border-radius: 50%;
  background: radial-gradient(#fff62c 62%, #fffa64 70%);
  mix-blend-mode: multiply;
  pointer-events: none;
`;
const Pointer = styled.svg`
  position: absolute;
  left: 165px;
  top: 43px;
  width: 9px;
  height: 13px;
  pointer-events: none;
`;

/* ---------- drawings ---------- */

const lerp = (a, b, t) => a + (b - a) * t;
const OUTER = [[348, 377], [504, 264], [861, 332], [769, 482]];
const INNER = [[450, 361], [529, 291], [757, 350], [717, 423]];
const loops = [0, 1, 2, 3, 4, 5, 6].map((i) =>
  OUTER.map((p, k) => [lerp(p[0], INNER[k][0], i / 7), lerp(p[1], INNER[k][1], i / 7)].join(",")).join(" ")
);

const Perspective = () => (
  <svg viewBox="333 101 547 550" preserveAspectRatio="xMidYMid slice" aria-label="Perspective view">
    <defs>
      <linearGradient id="shank"><stop offset="0" stopColor="#323435" /><stop offset=".5" stopColor="#3c3e3f" /><stop offset=".85" stopColor="#4d4f50" /><stop offset="1" stopColor="#2e3031" /></linearGradient>
      <linearGradient id="flute"><stop offset="0" stopColor="#c79c00" /><stop offset=".15" stopColor="#ffd000" /><stop offset=".45" stopColor="#ffe600" /><stop offset=".7" stopColor="#fffb00" /><stop offset=".93" stopColor="#ffee00" /><stop offset="1" stopColor="#b39400" /></linearGradient>
    </defs>
    <g stroke="#8f919b" strokeWidth="1" opacity=".25">
      {[0, 1, 2, 3, 4, 5, 6, 7, 8, 9, 10, 11].map((i) => (
        <path key={i} d={`M333 ${66 + i * 16}L880 ${138 + i * 20}`} />
      ))}
      {[0, 1, 2, 3, 4].map((i) => <path key={i} d={`M333 ${510 + i * 26}L880 ${670 + i * 36}`} />)}
      <path d="M590 101L333 250M640 101L420 250M800 101L640 280M880 150L760 300M880 190L800 310M520 545L440 651M610 570L540 651M700 590L640 651M880 560L850 651" />
    </g>
    <g stroke="#7c7e88" fill="none" opacity=".7">
      <path d="M540 101L403 172 345 203M420 108L633 137M680 144L880 172M333 152L450 173 600 198 638 205M677 211L880 244M333 237L475 266M880 111L784 214 710 295M755 101L880 117M333 574L550 651M440 580L378 651M880 507L835 610 818 651" />
    </g>
    <path d="M713 101L340 367" stroke="#45a045" strokeWidth="1.200" />
    <path d="M820 485l60 14" stroke="#a03a4c" strokeWidth="1.200" />
    <path d="M342 378L504 262 864 332 771 486z" fill="#959698" />
    <path d="M342 377.500L771 485.500 762 597 355 479z" fill="#ea9409" />
    <path d="M771 485.500L864 332 853 427 762 597z" fill="#9c6202" />
    <g fill="none" stroke="#7fdccb" strokeWidth=".9">
      {loops.map((pts) => <polygon key={pts} points={pts} />)}
      <path d="M717 423L450 361 529 291 757 350 736 379 831 402" />
    </g>
    <g fill="none" strokeWidth="1.300">
      <path d="M336 377L499 260M507 258L865 329" stroke="#72f0ea" />
      <path d="M339 381L768 490M779 488L870 336" stroke="#b3ecae" />
      <path d="M499 260q3-3 8-2M865 329q6 2 5 7M768 490q7 3 11-2M336 377q-2 3 3 4" stroke="#4c44c0" />
    </g>
    <path d="M476 357L705 408 721 386 735 350 757 350 717 423 450 361z" fill="#8d8e90" opacity=".35" />
    <path d="M716 368L735 343v7l-17 24zM705 396l16-20v10l-16 22z" fill="#808183" />
    <path d="M535 295.500L735 342.500 716 368 721 376 705 396 476 345z" fill="#b87307" />
    <path d="M476 345l229 51v12L476 357z" fill="#cbcbcb" />
    <path d="M834 377l-3 25-9-2" stroke="#f2e422" strokeWidth="1.400" fill="none" />
    <path d="M636.500 212h39.500L672.500 329Q655 325 635.500 318z" fill="url(#flute)" />
    <path d="M638 133L637 212q19 9 39.500 1L678.500 133z" fill="url(#shank)" />
    <ellipse cx="658" cy="133" rx="20.300" ry="6" fill="#333536" stroke="#2a2c2d" />
    <g strokeWidth="2">
      <path d="M340 366L337.500 346" stroke="#1c18dc" /><path d="M334 349l3-12 4.500 11z" fill="#1c18dc" />
      <path d="M340 366l12-8" stroke="#12e818" /><path d="M346 358l14-6-8 11z" fill="#12e818" />
      <path d="M340 366l18 4" stroke="#d4131c" /><path d="M356 366l11 7-12 1z" fill="#d4131c" />
      <circle cx="340" cy="366" r="2.500" fill="#1c18dc" />
    </g>
    <g stroke="#5d5f68" fill="none"><path d="M358 611v15l17 5M358 626l8-9" /></g>
    <g fontFamily={CLASSIC} fontSize="9" fill="#4c4e57"><text x="359" y="610">z</text><text x="367" y="619">y</text><text x="377" y="632">x</text></g>
  </svg>
);

const TopView = () => (
  <svg viewBox="881 101 261 275" preserveAspectRatio="xMidYMid slice" aria-label="Top view">
    <g stroke="#8f919b" opacity=".6">
      {[893, 921, 950, 979, 1008, 1065, 1094, 1122].map((x) => <path key={x} d={`M${x}.5 101v275`} />)}
      {[124, 210, 239, 267, 296, 353].map((y) => <path key={y} d={`M881 ${y}.5h261`} />)}
    </g>
    <path d="M1036.500 101v275M881 181.500h261" stroke="#7f818b" />
    <path d="M893.500 114v38" stroke="#2f9f38" />
    <path d="M893 325.500h249" stroke="#a1384c" />
    <rect x="893" y="153" width="237" height="171" fill="#fff" />
    <rect x="888.500" y="148.500" width="246" height="180" rx="3" fill="none" stroke="#6fdcd2" />
    <g fill="none" stroke="#90ebe8">
      {[0, 1, 2, 3, 4, 5, 6].map((i) => (
        <rect key={i} x={895 + i * 6.5} y={154.5 + i * 6.5} width={233 - i * 13} height={168 - i * 13} />
      ))}
      <path d="M945 199.500h138v39" />
      <path d="M1083 238.500h51" stroke="#58d3d6" />
    </g>
    <path d="M945 205h70l13 6h44v31l6 6v24H945z" fill="#f7e43a" />
    <circle cx="1019" cy="200" r="10.500" fill="#fcf120" />
    <path d="M889 152q0-4 4-4M1130 148q4 0 4 4M1134 325q0 3-4 3M889 325q0 3 4 3" fill="none" stroke="#4c44c0" />
    <path d="M893.500 324v-20" stroke="#14e61c" strokeWidth="2" /><path d="M890 307l3.500-13 3.500 13z" fill="#14e61c" />
    <path d="M893 324.500h20" stroke="#d4131c" strokeWidth="2" /><path d="M912 321.500l13 3-13 3z" fill="#d4131c" />
    <circle cx="893" cy="324.500" r="2.700" fill="#1c18dc" />
    <path d="M905.500 332v19.500h20" fill="none" stroke="#6a6c75" />
    <g fontFamily={CLASSIC} fontSize="9" fill="#4c4e57"><text x="907" y="333">y</text><text x="927" y="353">x</text></g>
  </svg>
);

const RightView = () => (
  <svg viewBox="881 377 261 274" preserveAspectRatio="xMidYMid slice" aria-label="Right view">
    <defs>
      <linearGradient id="cutter"><stop offset="0" stopColor="#8f7700" /><stop offset=".25" stopColor="#ead100" /><stop offset=".42" stopColor="#fff82e" /><stop offset=".6" stopColor="#c5ac00" /><stop offset=".85" stopColor="#4c4000" /><stop offset="1" stopColor="#151200" /></linearGradient>
      <linearGradient id="notch"><stop offset="0" stopColor="#9c9ea2" /><stop offset=".7" stopColor="#f4f4f4" /><stop offset="1" stopColor="#8e9095" /></linearGradient>
    </defs>
    <g stroke="#8f919b" opacity=".6">
      {[893, 932, 972, 1011, 1051, 1130].map((x) => <path key={x} d={`M${x}.5 377v274`} />)}
      {[386, 426, 583].map((y) => <path key={y} d={`M881 ${y}.5h261`} />)}
    </g>
    <path d="M1090.500 377v274M881 622.500h261" stroke="#858791" />
    <path d="M893.500 390v45" stroke="#2f9f38" />
    <path d="M893 464.500h249" stroke="#a1384c" />
    <rect x="964" y="465" width="86" height="9" fill="#fff" />
    <rect x="998" y="465" width="13" height="9" fill="url(#notch)" />
    <rect x="1050" y="377" width="29.500" height="98" fill="url(#cutter)" />
    <rect x="893" y="474" width="237" height="89" fill="#f7e43a" />
    <path d="M889 474.500h246" stroke="#a4e6a0" />
    <path d="M887 474.500h6M1130 474.500h6" stroke="#4c44c0" />
    <path d="M1011.500 455v19" stroke="#e8ea30" />
    <path d="M893 465v-20" stroke="#1c18dc" strokeWidth="2" /><path d="M889.500 447l3.500-14 3.500 14z" fill="#1c18dc" />
    <path d="M893 465h20" stroke="#14e61c" strokeWidth="2" /><path d="M912 462l14 3-14 3z" fill="#14e61c" />
    <rect x="890.500" y="462.500" width="5" height="5" fill="#1c18dc" />
    <path d="M905.500 608v17.500h20" fill="none" stroke="#6a6c75" />
    <g fontFamily={CLASSIC} fontSize="9" fill="#4c4e57"><text x="907" y="608">z</text><text x="927" y="628">y</text></g>
  </svg>
);

/* ---------- data ---------- */

const MENUS = ["File", "Edit", "View", "Curve", "Surface", "Solid", "Mesh", "Dimension", "Transform", "Tools", "Analyze", "Render", "Panels", "RhinoCAM 2018", "Help"];
const TABS = ["Standard", "CPlanes", "Set View", "Display", "Select", "Viewport Layout", "Visibility", "Transform", "Curve Tools", "Surface Tools", "Solid Tools", "Mesh Tools", "Render Tools", "Drafting", "New in V5"];
const TOP_ICONS = "doc open save* print docprops cut copy paste undo* hand rotate zoom zoomwin zoomext zoomsel undoview* fourview* car* cplane* circlept* select* bulb* lock* layers* wheel* shade render* blue* spot* options* dims* help*".split(" ");
const SIDE_ICONS = "arrow point* polyline* curve* circle* ellipse* arc* rect* polygon* fillet* srfpts* srfcurve* box* spheres* loft* patch* puzzle burst trim split bool1* bool2 bend bendpts* text move* array rotate2 solid* extrude* grid9* chain* books* check* solids* pyramid*".split(" ");
const SNAPS = ["End", "Near", "Point", "Mid", "Cen", "Int", "Perp", "Tan", "Quad", "Knot", "Vertex", "Project", "Disable"];
const VIEW_TOGGLES = [["g1", "Machine"], ["g2", "Stock", 1], ["g3", "Levels"], ["g4", "Part", 1], ["g5", "Fixture"], ["g6", "World", 1], ["g7", "Toolpath", 1], ["g8", "Tool", 1], ["g9", "Holder"], ["g10", "Head"]];
const SECTIONS = [
  ["Viewport", 51, [["Title", "Perspective"], ["Width", "818"], ["Height", "824"], ["Projection", "Perspective", "select"]]],
  ["Camera", 76, [["Lens Length", "50.0"], ["Rotation", "0.0"], ["X Location", "12.203"], ["Y Location", "-14.494"], ["Z Location", "9.982"], ["Location", "Place...", "button"]]],
  ["Target", 51, [["X Target", "4.314"], ["Y Target", "2.270"], ["Z Target", "-0.331"], ["Location", "Place...", "button"]]],
  ["Wallpaper", 38, [["Filename", "(none)", "browse"], ["Show", "", "check"], ["Gray", "", "check"]]],
];
const CELLS = [["CPlane", 38], ["x 0.338", 59], ["y -0.175", 59], ["z 0.000", 59], ["Inches", 58]];
const TOGGLES = [["Grid Snap", 51], ["Ortho", 32, 1], ["Planar", 35], ["Osnap", 36, 1], ["SmartTrack", 57], ["Gumball", 44], ["Record History", 72], ["Filter", 30]];

const IconSet = ({ names }) =>
  names.map((n) => {
    const name = n.replace("*", "");
    return (
      <IconButton key={name} $fly={n.endsWith("*")} aria-label={name}>
        <Icon name={name} />
      </IconButton>
    );
  });

const Node = ({ level = 0, exp, icon, text, ml = 2, last, bold, bg, color }) => (
  <TreeRow $level={level} $last={last}>
    {exp ? <Expander $plus={exp === "+"} aria-label={`Toggle ${text}`} /> : <Slot />}
    <Branch />
    <Icon name={icon} size={14} />
    <TreeText $ml={ml} $bold={bold} $bg={bg} $color={color}>{text}</TreeText>
  </TreeRow>
);

const PropValue = ({ label, value, kind }) => {
  if (kind === "button") return <PlaceButton>{value}</PlaceButton>;
  if (kind === "check") return <Check type="checkbox" defaultChecked aria-label={label} />;
  if (kind === "select")
    return (
      <CellRow>
        <select aria-label={label}><option>{value}</option></select>
        <TinyButton aria-label="Open list"><Caret /></TinyButton>
      </CellRow>
    );
  if (kind === "browse") return <CellRow>{value}<TinyButton>...</TinyButton></CellRow>;
  return value;
};

const RB = ({ icon, children, ...p }) => (
  <RibbonButton {...p}><Icon name={icon} size={14} />{children}</RibbonButton>
);

export default function App() {
  return (
    <Page>
      <GlobalStyle />
      <Shell>
        <TitleBar><Icon name="app" size={10} />2AxisIntroductionTutorial.3dm (218 KB) - Rhinoceros 5.0 Not For Resale Lab</TitleBar>
        <MenuBar>{MENUS.map((m) => <MenuItem key={m}>{m}</MenuItem>)}</MenuBar>
        <CommandRow>Command:<input type="text" /></CommandRow>
        <ToolTabs>{TABS.map((t, i) => <ToolTab key={t} $on={i === 0}>{t}</ToolTab>)}</ToolTabs>
        <ToolRow><ToolStrip><IconSet names={TOP_ICONS} /></ToolStrip></ToolRow>

        <Main>
          <SideTools><IconSet names={SIDE_ICONS} /></SideTools>

          <Dock>
            <DockTitle><h2>RhinoCAM 2018 - Machining Browser</h2><button aria-label="Close">×</button></DockTitle>
            <RibbonTabs>
              <ModeButton $w={22}>MILL</ModeButton>
              <ModeButton $w={15} aria-label="Tools"><Icon name="tools" size={12} /></ModeButton>
              <RibbonTab $ml={2}>Program</RibbonTab>
              <RibbonTab $ml={3} $on>Simulate</RibbonTab>
              <RibbonExtras>
                <Icon name="up" size={9} /><Icon name="hammer" size={13} /><Caret /><Icon name="cog" size={12} /><Icon name="info" size={12} />
              </RibbonExtras>
            </RibbonTabs>
            <RibbonWrap>
              <Ribbon>
                <RibbonGroup $w={89} $pl={4}>
                  <RibbonCols $cols="1fr">
                    <RB icon="prefs">Preferences</RB>
                    <Slider type="range" min="0" max="100" defaultValue="12" aria-label="Simulation speed" />
                    <CheckLabel $gap={4}><Check type="checkbox" $soft />Simulate by Moves</CheckLabel>
                  </RibbonCols>
                  <h3>Options</h3>
                </RibbonGroup>
                <RibbonGroup $w={168} $pl={5}>
                  <RibbonCols $cols="49px 60px auto">
                    <RB icon="stock">Stock<Caret $ml={2} /></RB>
                    <RB icon="play" $on>Play</RB>
                    <RB icon="step">Step</RB>
                    <RB icon="levels">Step Levels</RB>
                    <RB icon="toend" disabled>To End</RB>
                    <RB icon="pause" disabled>Pause</RB>
                    <RB icon="stop">Stop</RB>
                    <RB icon="compare">Compare</RB>
                  </RibbonCols>
                  <h3>Simulate</h3>
                </RibbonGroup>
              </Ribbon>
              <Spotlight />
              <Pointer viewBox="0 0 9 13"><path d="M1 1v9l2-2 2 4 2-1-2-3.500h3z" fill="#fff" stroke="#4d4a20" strokeWidth=".8" /></Pointer>
            </RibbonWrap>
            <TreeBox>
              <Tree $h={80}>
                <Node exp="-" icon="job" text="Machining Job" bold />
                <Node level={1} icon="machine" text="Machine - 3 Axis" ml={5} />
                <Node level={1} icon="post" text="Post - Haas" ml={5} />
                <Node level={1} icon="stock" text="Stock - Box Stock" ml={5} />
                <Node level={1} exp="-" icon="setup" text="Setup 1" bold last ml={1} />
                <Node level={2} exp="+" icon="folder" text="2 1/2 Axis Facing" last bg="#0c74c9" color="#fff" ml={0} />
              </Tree>
            </TreeBox>
            <Bar $h={18} $pl={1}>
              {VIEW_TOGGLES.map(([icon, label, on]) => (
                <BarButton key={icon} $on={!!on} aria-label={label}><Icon name={icon} size={13} /></BarButton>
              ))}
              <SelectBox $w={67} $ml="auto"><select aria-label="Visibility"><option>Default</option></select><Caret /></SelectBox>
            </Bar>
            <Progress><span>GOTO 20/149</span><progress value="20" max="160" aria-label="Simulation progress" /></Progress>

            <DockTitle $h={18}><h2>RhinoCAM 2018 - Machining Objects</h2><button aria-label="Close">×</button></DockTitle>
            <ObjTabs>
              <ObjTab $on $mr={1}><Icon name="tools" size={14} />Tools</ObjTab>
              <ObjTab><Icon name="regions" size={16} />Regions</ObjTab>
              <ObjTab><Icon name="features" size={15} />Features</ObjTab>
              <ObjTab><Icon name="kbases" size={13} />K-Bases</ObjTab>
            </ObjTabs>
            <Bar $h={22} $pl={3}>
              <BarButton aria-label="New tool"><Icon name="tool" /></BarButton><Rule />
              <BarButton $w={20} aria-label="Load"><Icon name="load" /></BarButton>
              <BarButton $w={20} aria-label="Import"><Icon name="loadg" /></BarButton>
              <BarButton $w={20} aria-label="Save"><Icon name="load" /></BarButton>
              <BarButton $w={20} aria-label="Undo"><Icon name="undotool" /></BarButton><Rule />
              <BarButton aria-label="Delete"><Icon name="dele" /></BarButton><Rule />
              <BarButton $w={16} aria-label="Create"><Icon name="sparkle" size={15} /></BarButton>
            </Bar>
            <TreeBox $h={105}>
              <Tree $h={40}>
                <Node exp="-" icon="tools" text="Tools" bold />
                <Node level={1} exp="+" icon="mill" text="FLATMILL- 3/4 INCH" bg="#c6c6c8" ml={1} />
                <Node level={1} icon="mill" text="FLATMILL- 1/4 INCH" last ml={1} />
              </Tree>
            </TreeBox>
            <Bar $h={18} $pl={1}>
              <SelectBox $w={80}><select aria-label="Sort"><option>No Sort</option></select><Caret /></SelectBox>
              <BarButton aria-label="Sort order"><Icon name="sort" size={13} /></BarButton><Rule />
              <BarButton aria-label="Filter"><Icon name="filter" size={13} /></BarButton>
            </Bar>
            <ToolStatus>FLATMILL- 3/4 INCH | #1 | Dia:0.75, CRad:0, Taper:0 deg | RPM: 8000 | F: 60</ToolStatus>
          </Dock>

          <Work>
            <Viewports>
              <Viewport $tall><Perspective /><ViewLabel $on>Perspective</ViewLabel></Viewport>
              <Viewport><TopView /><ViewLabel>Top</ViewLabel></Viewport>
              <Viewport><RightView /><ViewLabel>Right</ViewLabel></Viewport>
            </Viewports>
            <ViewTabs>
              <ViewTab $on>Perspective</ViewTab><ViewTab>Top</ViewTab><ViewTab>Right</ViewTab><ViewTab aria-label="Add view"><Icon name="plus" size={7} /></ViewTab>
            </ViewTabs>
          </Work>

          <Props>
            <PropTabs>
              <PropTab $on $w={31}><Icon name="wheel" size={11} />Pr...</PropTab>
              <PropTab $w={30}><Icon name="layers" size={11} />La...</PropTab>
              <PropTab $w={29}><Icon name="monitor" size={11} />Di...</PropTab>
              <PropTab $w={28}><Icon name="helppane" size={11} />H...</PropTab>
            </PropTabs>
            <PropBody>
              {SECTIONS.map(([title, h, rows]) => (
                <React.Fragment key={title}>
                  <h3>{title}</h3>
                  <PropTable $h={h}>
                    <tbody>
                      {rows.map(([label, value, kind]) => (
                        <tr key={label}><th scope="row">{label}</th><td><PropValue label={label} value={value} kind={kind} /></td></tr>
                      ))}
                    </tbody>
                  </PropTable>
                </React.Fragment>
              ))}
            </PropBody>
          </Props>
        </Main>

        <SnapBar>
          {SNAPS.map((s, i) => (
            <CheckLabel key={s} $gap={2}>
              <Check type="checkbox" defaultChecked={s === "Near"} $soft={i > 10} />
              {s}
            </CheckLabel>
          ))}
        </SnapBar>
        <StatusBar>
          {CELLS.map(([t, w]) => <StatusCell key={t} $w={w}>{t}</StatusCell>)}
          <StatusCell $w={115} $left><Swatch />Default</StatusCell>
          {TOGGLES.map(([t, w, on]) => <StatusCell key={t} $w={w} $on={!!on}>{t}</StatusCell>)}
          <Message>Minutes from last save: 21</Message>
        </StatusBar>

        <Logo viewBox="0 0 136 136" role="img" aria-label="MecSoft">
          <defs><linearGradient id="corner" x1="0" y1="0" x2="1" y2="1"><stop offset="0" stopColor="#fff" stopOpacity=".2" /><stop offset=".5" stopColor="#c9c9cb" stopOpacity=".75" /><stop offset="1" stopColor="#f2f2f4" stopOpacity=".7" /></linearGradient></defs>
          <path d="M2 1h134v134z" fill="url(#corner)" />
          <g fill="none" stroke="#4a4a50"><rect x="86" y="5" width="4" height="4" /><path d="M87.500 5V3.500h4V8H90M117 4l6 6M123 4l-6 6" /></g>
          <path d="M2 2l134 133" stroke="#cb5e82" strokeWidth="3" />
          <g fontFamily='"Liberation Serif", serif' fill="#8b8b8f" stroke="#77777c" strokeWidth=".8">
            <text x="38" y="32" fontSize="40">MecS</text>
            <text x="114" y="55" fontSize="40">o</text><text x="116" y="86" fontSize="42">f</text><text x="116" y="114" fontSize="42">t</text>
          </g>
        </Logo>
      </Shell>
    </Page>
  );
}
